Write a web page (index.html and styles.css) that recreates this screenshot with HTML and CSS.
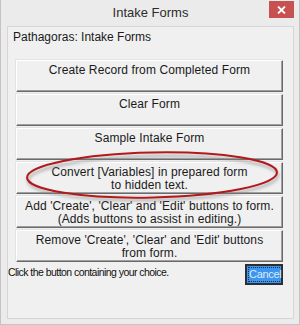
FILE: index.html
```html
<!DOCTYPE html>
<html>
<head>
<meta charset="utf-8">
<link rel="stylesheet" href="styles.css">
</head>
<body>
<div class="window">
  <div class="titlebar">
    <span class="title">Intake Forms</span>
    <span class="close"><svg width="9" height="8" viewBox="0 0 9 8"><path d="M1 0.5 L8 7.5 M8 0.5 L1 7.5" stroke="#fff" stroke-width="1.8"/></svg></span>
  </div>
  <div class="panel">
    <div class="heading">Pathagoras: Intake Forms</div>
    <div class="buttons">
      <div class="btn">Create Record from Completed Form</div>
      <div class="btn">Clear Form</div>
      <div class="btn">Sample Intake Form</div>
      <div class="btn">Convert [Variables] in prepared form<br>to hidden text.</div>
      <div class="btn">Add 'Create', 'Clear' and 'Edit' buttons to form.<br>(Adds buttons to assist in editing.)</div>
      <div class="btn">Remove 'Create', 'Clear' and 'Edit' buttons<br>from form.</div>
    </div>
    <div class="footer">
      <span class="hint">Click the button containing your choice.</span>
      <span class="cancel"><span class="cancel-inner">Cancel</span></span>
    </div>
  </div>
  <svg class="annot" width="300" height="325" viewBox="0 0 300 325">
    <defs>
      <filter id="sh" x="-10%" y="-30%" width="120%" height="160%">
        <feGaussianBlur stdDeviation="1.6"/>
      </filter>
    </defs>
    <ellipse cx="152" cy="178" rx="125" ry="22" transform="rotate(-1.2 152 178)" fill="none" stroke="#888" stroke-width="2.5" opacity="0.6" filter="url(#sh)"/>
    <ellipse cx="151" cy="175" rx="125" ry="22.5" transform="rotate(-1.2 151 175)" fill="none" stroke="#b3181c" stroke-width="2"/>
  </svg>
</div>
</body>
</html>
```
FILE: styles.css
```css
html, body {
  margin: 0;
  padding: 0;
  background: #ececec;
}
.window {
  position: relative;
  width: 300px;
  height: 325px;
  box-sizing: border-box;
  background: #ebebeb;
  border-left: 1px solid #c4c4c4;
  border-right: 1px solid #c4c4c4;
  border-bottom: 1px solid #c4c4c4;
  padding: 0 5px 5px 6px;
  font-family: "Liberation Sans", Arial, sans-serif;
}
.titlebar {
  height: 26px;
  display: flex;
  align-items: flex-start;
  justify-content: center;
  position: relative;
}
.title {
  font-family: "Liberation Sans", Arial, sans-serif;
  font-size: 13px;
  color: #2b2b2b;
  margin-top: 5px;
  line-height: 16px;
}
.close {
  position: absolute;
  right: 0px;
  top: 1px;
  width: 25px;
  height: 17px;
  background: #c75050;
  display: flex;
  align-items: center;
  justify-content: center;
}
.panel {
  height: 293px;
  box-sizing: border-box;
  background: #f0f0f0;
  border: 1px solid #d6d6d6;
  display: flex;
  flex-direction: column;
}
.heading {
  font-size: 12px;
  color: #1a1a1a;
  padding: 3px 0 0 5px;
  height: 30px;
  box-sizing: border-box;
  line-height: 14px;
}
.buttons {
  display: flex;
  flex-direction: column;
  gap: 2px;
  padding: 3px 10px 0 8px;
}
.btn {
  height: 32px;
  box-sizing: border-box;
  background: #f0f0f0;
  border-top: 1px solid #ffffff;
  border-left: 1px solid #ffffff;
  border-right: 1px solid #696969;
  border-bottom: 1px solid #696969;
  box-shadow: inset -1px -1px 0 #a0a0a0, -1px -1px 0 #e3e3e3;
  text-align: center;
  font-size: 12px;
  line-height: 13px;
  color: #1a1a1a;
  padding-top: 3px;
  white-space: nowrap;
  letter-spacing: 0.1px;
}
.footer {
  display: flex;
  justify-content: space-between;
  align-items: flex-start;
  padding: 2px 10px 0 0;
}
.hint {
  font-size: 10.5px;
  letter-spacing: -0.55px;
  color: #111;
  margin-top: 2px;
}
.cancel {
  margin-top: 0;
  width: 38px;
  height: 21px;
  box-sizing: border-box;
  border: 2px solid #2e2e2e;
  background: #3d95ee;
  display: flex;
  padding: 1px;
}
.cancel-inner {
  flex: 1;
  border: 1px dotted #1c2f4a;
  color: #d8ecff;
  font-size: 11px;
  line-height: 13px;
  text-align: center;
  letter-spacing: -0.3px;
}
.annot {
  position: absolute;
  left: 0;
  top: 0;
  pointer-events: none;
}
```
